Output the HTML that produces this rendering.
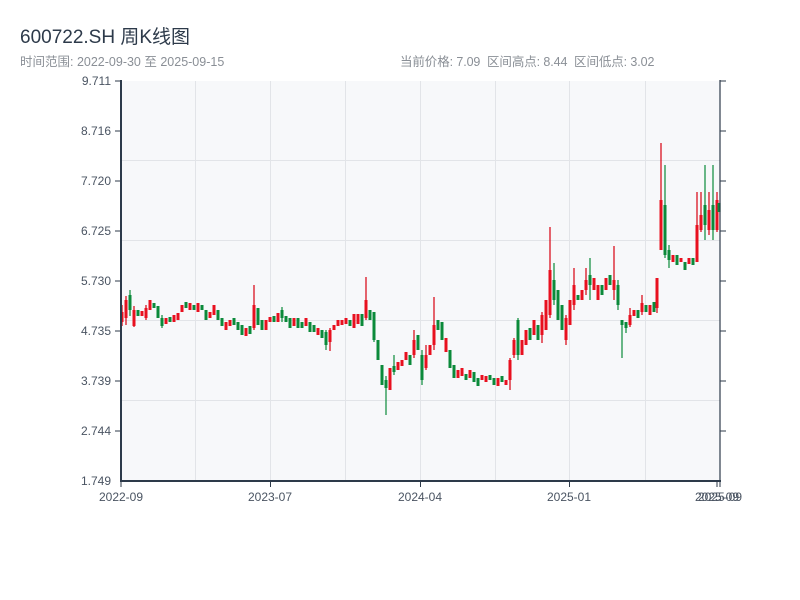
<!DOCTYPE html>
<html><head><meta charset="utf-8"><style>
html,body{margin:0;padding:0;background:#fff;width:800px;height:600px;overflow:hidden;font-family:"Liberation Sans","Noto Sans CJK SC",sans-serif}
.t{position:absolute;left:20px;top:22px;font-size:19px;color:#2d3a4a}
.s{position:absolute;left:20px;top:51px;font-size:12.5px;color:#8a8f96}
.r{position:absolute;left:400px;top:51px;font-size:12.5px;color:#8a8f96;white-space:pre;letter-spacing:-0.1px}
svg{position:absolute;left:0;top:0}
</style></head><body>
<div class="t">600722.SH 周K线图</div>
<div class="s">时间范围: 2022-09-30 至 2025-09-15</div>
<div class="r">当前价格: 7.09  区间高点: 8.44  区间低点: 3.02</div>
<svg width="800" height="600" font-family="Liberation Sans, sans-serif" font-size="12" fill="#4a5462">
<rect x="121" y="81" width="599" height="400" fill="#f7f8fa"/>
<g stroke="#e2e4e8" stroke-width="1">
<line x1="121" x2="720" y1="160.5" y2="160.5"/><line x1="121" x2="720" y1="240.5" y2="240.5"/>
<line x1="121" x2="720" y1="320.5" y2="320.5"/><line x1="121" x2="720" y1="400.5" y2="400.5"/>
<line x1="195.5" x2="195.5" y1="81" y2="481"/><line x1="345.5" x2="345.5" y1="81" y2="481"/>
<line x1="495.5" x2="495.5" y1="81" y2="481"/><line x1="645.5" x2="645.5" y1="81" y2="481"/>
<line x1="270.5" x2="270.5" y1="81" y2="481"/><line x1="420.5" x2="420.5" y1="81" y2="481"/><line x1="569.5" x2="569.5" y1="81" y2="481"/>
</g>
<!-- red wicks -->
<path stroke="#d8000f" stroke-width="1.2" fill="none" d="M122 305V326M126 296V325M134 306V327M142 311V316M146 305V320M150 300V310M166 318V324M174 315V322M178 313V320M182 305V312M190 303V310M198 303V312M210 312V318M214 305V315M226 322V330M230 320V326M246 328V336M254 285V330M266 320V330M270 317V322M278 313V322M294 318V326M306 318V326M318 328V335M330 328V351M334 325V330M338 320V326M342 320V325M346 318V324M354 314V328M358 314V324M366 277V320M390 368V390M398 362V370M402 360V366M406 352V360M414 330V358M426 345V370M430 345V355M434 297V350M446 338V352M458 370V378M462 368V376M470 370V378M482 375V380M486 376V382M498 378V386M506 380V385M510 358V390M514 338V358M522 340V355M526 330V345M534 320V335M542 312V343M546 300V330M550 227V318M566 315V345M570 300V325M574 268V310M582 290V300M586 268V295M594 278V290M598 285V300M606 278V290M614 246V300M630 308V327M634 310V316M642 295V315M650 305V315M657 278V313M661 143V250M673 255V262M681 258V262M689 258V264M697 192V262M701 192V232M709 192V235M717 192V232"/>
<!-- red bodies -->
<path stroke="#e8101f" stroke-width="3" fill="none" d="M122 312V322M126 300V318M134 310V326M142 311V316M146 308V318M150 300V310M166 318V324M174 315V322M178 313V320M182 305V312M190 303V310M198 303V312M210 312V318M214 305V315M226 322V330M230 320V326M246 328V336M254 305V328M266 320V330M270 317V322M278 313V322M294 318V326M306 318V326M318 328V335M330 330V342M334 325V330M338 320V326M342 320V325M346 318V324M354 314V328M358 314V324M366 300V318M390 368V390M398 362V370M402 360V366M406 352V360M414 340V355M426 355V368M430 345V355M434 325V345M446 338V352M458 370V378M462 368V376M470 370V378M482 375V380M486 376V382M498 378V386M506 380V385M510 360V380M514 340V355M522 340V355M526 330V345M534 320V335M542 315V335M546 300V330M550 270V315M566 318V340M570 300V325M574 285V305M582 290V300M586 280V290M594 278V290M598 285V300M606 278V290M614 280V290M630 315V325M634 310V316M642 303V312M650 305V315M657 278V308M661 200V250M673 255V262M681 258V262M689 258V264M697 225V262M701 215V230M709 210V230M717 200V230"/>
<!-- green wicks -->
<path stroke="#0b8a3a" stroke-width="1.2" fill="none" d="M130 290V316M138 310V316M154 303V308M158 306V318M162 315V328M170 317V322M186 302V308M194 305V310M202 305V310M206 310V320M218 310V320M222 318V326M234 318V325M238 322V330M242 325V335M250 326V334M258 308V325M262 320V330M274 316V322M282 307V322M286 316V322M290 318V328M298 318V328M302 322V328M310 322V332M314 325V332M322 330V338M326 330V350M350 320V326M362 314V326M370 310V320M374 312V342M378 340V360M382 365V385M386 376V415M394 355V375M410 355V365M418 335V350M422 350V385M438 320V330M442 322V340M450 350V368M454 365V378M466 374V380M474 372V382M478 378V386M490 375V380M494 378V385M502 376V382M518 318V360M530 328V340M538 325V340M554 263V305M558 290V320M562 305V330M578 295V300M590 258V300M602 285V295M610 275V285M618 280V310M622 320V358M626 322V333M638 310V318M646 305V312M654 302V312M665 165V258M669 245V268M677 255V265M685 262V270M693 258V265M705 165V240M713 165V240M720 203V212"/>
<path stroke="#0b8a3a" stroke-width="3" fill="none" d="M130 295V310M138 310V316M154 303V308M158 306V318M162 318V326M170 317V322M186 302V308M194 305V310M202 305V310M206 310V320M218 310V320M222 318V326M234 318V325M238 322V330M242 325V335M250 326V334M258 308V325M262 320V330M274 316V322M282 310V318M286 316V322M290 318V328M298 318V328M302 322V328M310 322V332M314 325V332M322 330V338M326 332V345M350 320V326M362 314V326M370 310V320M374 312V340M378 340V360M382 365V385M386 380V388M394 366V372M410 355V365M418 335V350M422 355V380M438 320V330M442 322V340M450 350V368M454 365V378M466 374V380M474 372V382M478 378V386M490 375V380M494 378V385M502 376V382M518 320V355M530 328V340M538 325V340M554 280V300M558 290V320M562 305V330M578 295V300M590 275V285M602 285V295M610 275V285M618 285V305M622 320V325M626 322V328M638 310V318M646 305V312M654 302V312M665 205V255M669 250V260M677 255V265M685 262V270M693 258V265M705 205V225M713 205V230M719 203V212"/>
<g stroke="#2d3a4a" stroke-width="2" fill="none">
<line x1="121" y1="80" x2="121" y2="482"/><line x1="120" y1="481" x2="721" y2="481"/>
<line x1="720" y1="80" x2="720" y2="482" stroke-width="1.2"/>
</g>
<g stroke="#2d3a4a" stroke-width="1">
<line x1="115" x2="121" y1="81" y2="81"/><line x1="115" x2="121" y1="131" y2="131"/><line x1="115" x2="121" y1="181" y2="181"/><line x1="115" x2="121" y1="231" y2="231"/><line x1="115" x2="121" y1="281" y2="281"/><line x1="115" x2="121" y1="331" y2="331"/><line x1="115" x2="121" y1="381" y2="381"/><line x1="115" x2="121" y1="431" y2="431"/>
<line x1="720" x2="726" y1="81" y2="81"/><line x1="720" x2="726" y1="131" y2="131"/><line x1="720" x2="726" y1="181" y2="181"/><line x1="720" x2="726" y1="231" y2="231"/><line x1="720" x2="726" y1="281" y2="281"/><line x1="720" x2="726" y1="331" y2="331"/><line x1="720" x2="726" y1="381" y2="381"/><line x1="720" x2="726" y1="431" y2="431"/>
<line x1="121" x2="121" y1="481" y2="487"/><line x1="270.5" x2="270.5" y1="481" y2="487"/><line x1="420.5" x2="420.5" y1="481" y2="487"/><line x1="569.5" x2="569.5" y1="481" y2="487"/><line x1="717" x2="717" y1="481" y2="487"/><line x1="720" x2="720" y1="481" y2="487"/>
</g>
<g text-anchor="end">
<text x="111" y="85">9.711</text><text x="111" y="135">8.716</text><text x="111" y="185">7.720</text><text x="111" y="235">6.725</text><text x="111" y="285">5.730</text><text x="111" y="335">4.735</text><text x="111" y="385">3.739</text><text x="111" y="435">2.744</text><text x="111" y="485">1.749</text>
</g>
<g text-anchor="middle">
<text x="121" y="501">2022-09</text><text x="270" y="501">2023-07</text><text x="420" y="501">2024-04</text><text x="569" y="501">2025-01</text><text x="717" y="501">2025-09</text><text x="720" y="501">2025-09</text>
</g>
</svg>
</body></html>
